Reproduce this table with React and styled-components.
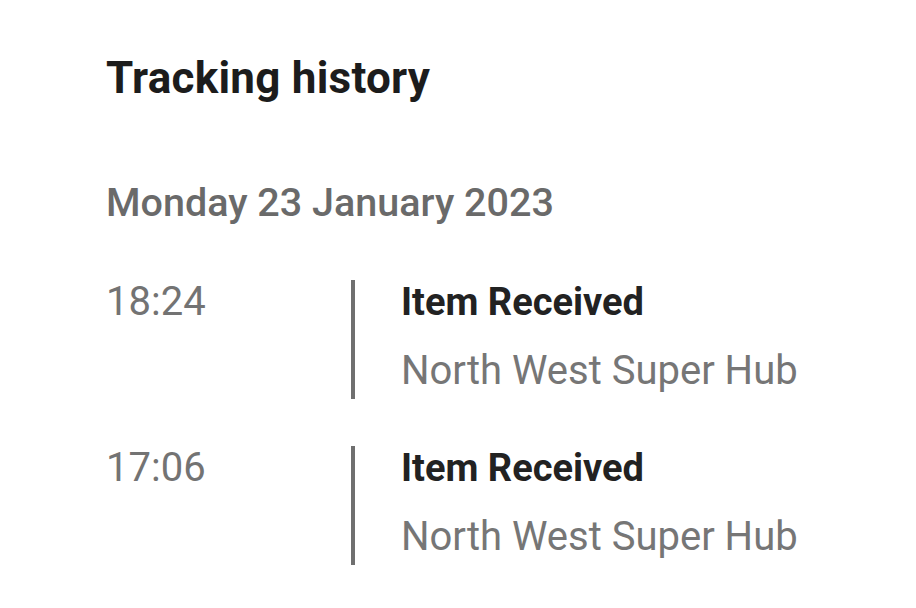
import React from "react";
import styled, { createGlobalStyle } from "styled-components";

const Global = createGlobalStyle`
  html, body { margin: 0; padding: 0; background: #ffffff; }
  body { font-family: Roboto, "Liberation Sans", sans-serif; }
`;

const Page = styled.main`
  width: 916px;
  min-height: 608px;
  box-sizing: border-box;
  padding: 52px 0 0 106px;
  background: #fff;
`;

const Title = styled.h2`
  margin: 0;
  font-size: 44px;
  line-height: 52px;
  font-weight: 700;
  letter-spacing: 0.25px;
  color: #1c1c1c;
`;

const DateHeading = styled.h3`
  margin: 77px 0 0;
  font-size: 39.5px;
  line-height: 44px;
  font-weight: 500;
  color: #6a6a6a;
`;

const Events = styled.ol`
  list-style: none;
  margin: 55px 0 0;
  padding: 0;
  display: flex;
  flex-direction: column;
  gap: 47px;
`;

const Event = styled.li`
  display: grid;
  grid-template-columns: 245px 1fr;
`;

const Time = styled.span`
  font-size: 40px;
  line-height: 44px;
  color: #737373;
`;

const Detail = styled.div`
  border-left: 4px solid #6f6f6f;
  padding: 0 0 6px 46px;
  display: flex;
  flex-direction: column;
  gap: 25px;
`;

const Status = styled.span`
  font-size: 38px;
  line-height: 44px;
  font-weight: 700;
  color: #222;
`;

const Place = styled.span`
  font-size: 40px;
  line-height: 44px;
  color: #767676;
`;

const events = [
  { time: "18:24", status: "Item Received", place: "North West Super Hub" },
  { time: "17:06", status: "Item Received", place: "North West Super Hub" },
];

export default function App() {
  return (
    <>
      <Global />
      <Page>
        <Title>Tracking history</Title>
        <DateHeading>Monday 23 January 2023</DateHeading>
        <Events>
          {events.map((e) => (
            <Event key={e.time}>
              <Time>{e.time}</Time>
              <Detail>
                <Status>{e.status}</Status>
                <Place>{e.place}</Place>
              </Detail>
            </Event>
          ))}
        </Events>
      </Page>
    </>
  );
}
